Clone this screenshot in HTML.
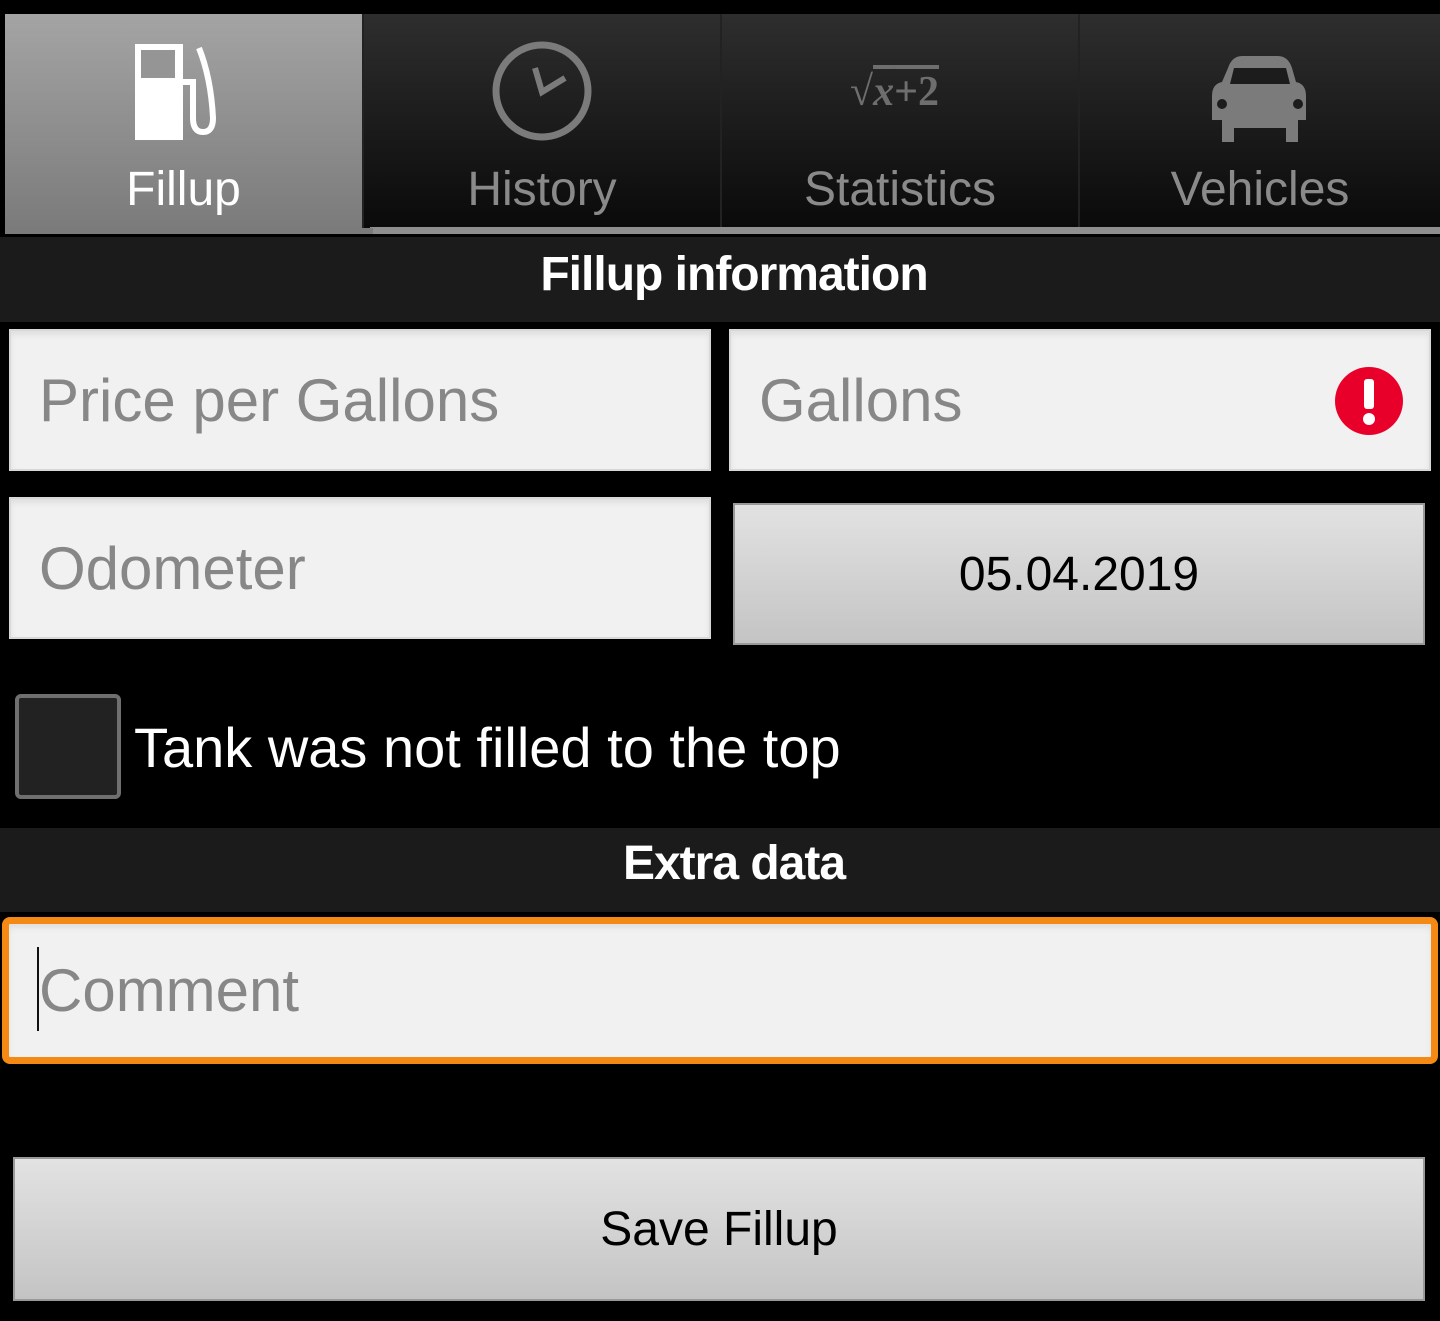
<!DOCTYPE html>
<html><head><meta charset="utf-8"><style>
*{margin:0;padding:0;box-sizing:border-box}
body{width:1440px;height:1321px;background:#000;font-family:"Liberation Sans",sans-serif;position:relative;overflow:hidden}
.abs{position:absolute}
.tab{position:absolute;top:14px;height:214px;background:linear-gradient(#2e2e2e,#0a0a0a);border-left:2px solid #222}
.tab .lbl{position:absolute;left:0;right:0;top:147px;text-align:center;font-size:48px;color:#8a8a8a;line-height:58px}
.bar{position:absolute;left:0;width:1440px;background:#1b1b1b;color:#fff;font-weight:bold;text-align:center;font-size:48px;letter-spacing:-1px;padding-left:28px}
.field{position:absolute;background:#f1f1f1;border:2px solid #d8d8d8;box-shadow:inset 0 4px 6px #e0e0e0;color:#878787;font-size:60px;padding-left:28px;display:flex;align-items:center}
.btn{position:absolute;background:linear-gradient(#e2e2e2,#c4c4c4);border:2px solid #999;color:#000;font-size:48px;display:flex;align-items:center;justify-content:center}
</style></head><body>
<div class="tab" style="left:5px;width:357px;background:linear-gradient(#a4a4a4,#7b7b7b);border-left:none">
<svg class="abs" style="left:126px;top:26px" width="108" height="116" viewBox="0 0 108 116">
<rect x="4" y="4" width="48" height="96" fill="#fff"/><rect x="10" y="10" width="34" height="28" fill="#959595"/>
<path d="M52 42 h10 v36 q0 14 10 14 q10 0 10 -14 q-2 -40 -14 -70" stroke="#fff" stroke-width="6" fill="none"/>
</svg>
<div class="lbl" style="color:#fff">Fillup</div></div>
<div class="tab" style="left:362px;width:358px">
<svg class="abs" style="left:128px;top:26px" width="100" height="102"><ellipse cx="50" cy="51" rx="46" ry="46" stroke="#7b7b7b" stroke-width="7" fill="none"/><path d="M43 28 L50 52 L73 38" stroke="#7b7b7b" stroke-width="6" fill="none"/></svg>
<div class="lbl">History</div></div>
<div class="tab" style="left:720px;width:358px">
<div class="abs" style="left:128px;top:54px;font-family:'Liberation Serif',serif;font-size:42px;font-weight:bold;color:#6e6e6e">√<span style="text-decoration:overline;font-style:italic">x</span><span style="text-decoration:overline">+2</span></div>
<div class="lbl">Statistics</div></div>
<div class="tab" style="left:1078px;width:362px">
<svg class="abs" style="left:128px;top:38px" width="104" height="92" viewBox="0 0 104 92"><path d="M20 16 Q24 4 34 4 H70 Q80 4 84 16 L88 30 Q98 32 98 44 V68 H90 V90 H78 V76 H26 V90 H14 V68 H4 V44 Q4 32 14 30 Z" fill="#7b7b7b"/><path d="M26 16 H78 L82 32 H22 Z" fill="#1c1c1c"/><circle cx="14" cy="52" r="5" fill="#1c1c1c"/><circle cx="90" cy="52" r="5" fill="#1c1c1c"/></svg>
<div class="lbl">Vehicles</div></div>
<div class="abs" style="left:370px;top:227px;width:1070px;height:7px;background:#8e8e8e"></div>
<div class="abs" style="left:5px;top:228px;width:368px;height:6px;background:#7b7b7b"></div>
<div class="bar" style="top:237px;height:85px;line-height:76px">Fillup information</div>
<div class="field" style="left:9px;top:329px;width:702px;height:142px">Price per Gallons</div>
<div class="field" style="left:729px;top:329px;width:702px;height:142px">Gallons
<svg class="abs" style="left:604px;top:36px" width="68" height="68"><circle cx="34" cy="34" r="34" fill="#e8002a"/><rect x="29" y="12" width="10" height="30" rx="3" fill="#fff"/><circle cx="34" cy="52" r="6" fill="#fff"/></svg></div>
<div class="field" style="left:9px;top:497px;width:702px;height:142px">Odometer</div>
<div class="btn" style="left:733px;top:503px;width:692px;height:142px">05.04.2019</div>
<div class="abs" style="left:15px;top:694px;width:106px;height:105px;border:4px solid #6f6f6f;border-radius:6px;background:#222"></div>
<div class="abs" style="left:134px;top:713px;font-size:56px;color:#fff;line-height:70px">Tank was not filled to the top</div>
<div class="bar" style="top:828px;height:84px;line-height:72px">Extra data</div>
<div class="field" style="left:2px;top:917px;width:1436px;height:147px;border:7px solid #f48a14;border-radius:8px;padding-left:30px">Comment</div>
<div class="abs" style="left:37px;top:947px;width:2px;height:84px;background:#111"></div>
<div class="btn" style="left:13px;top:1157px;width:1412px;height:144px">Save Fillup</div>
</body></html>
